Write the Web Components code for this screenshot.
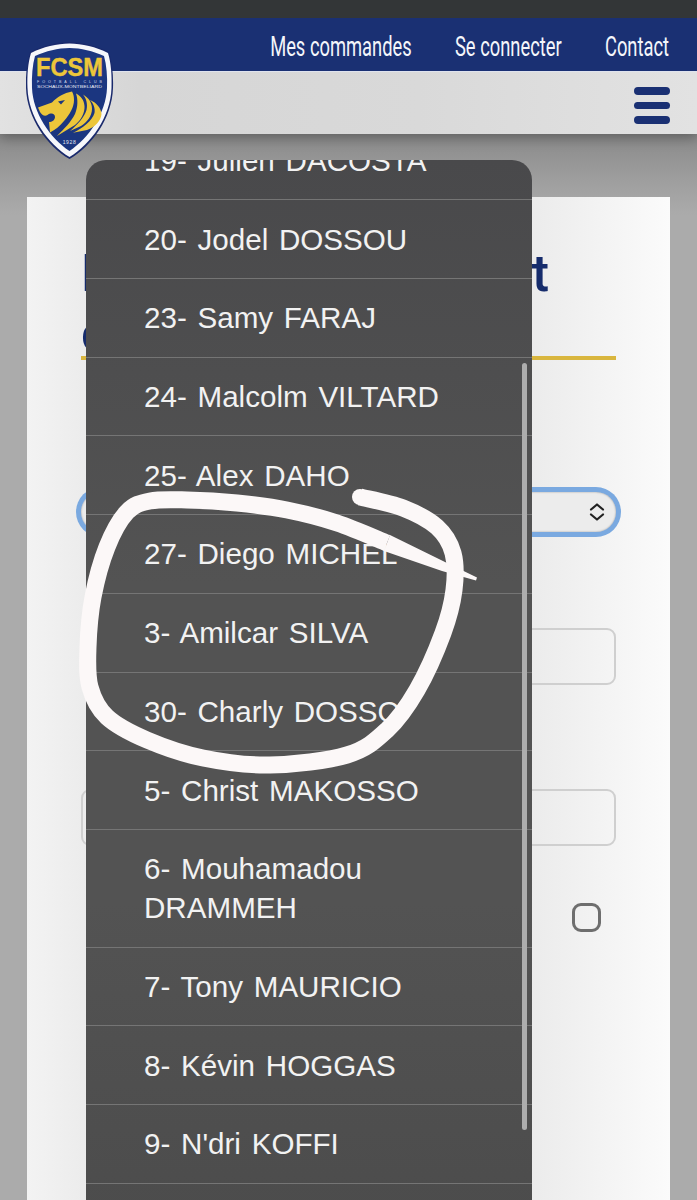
<!DOCTYPE html>
<html lang="fr">
<head>
<meta charset="utf-8">
<title>FCSM</title>
<style>
  html, body { margin: 0; height: 1200px; overflow: hidden; background: #aaaaaa; }
</style>
</head>
<body>
<shop-page>
  <site-header slot="header">
    <a slot="nav">Mes commandes</a>
    <a slot="nav">Se connecter</a>
    <a slot="nav">Contact</a>
  </site-header>
  <order-form slot="main"></order-form>
  <player-picker slot="overlay">
    <player-option>19- Julien DACOSTA</player-option>
    <player-option>20- Jodel DOSSOU</player-option>
    <player-option>23- Samy FARAJ</player-option>
    <player-option>24- Malcolm VILTARD</player-option>
    <player-option>25- Alex DAHO</player-option>
    <player-option>27- Diego MICHEL</player-option>
    <player-option>3- Amilcar SILVA</player-option>
    <player-option>30- Charly DOSSO</player-option>
    <player-option>5- Christ MAKOSSO</player-option>
    <player-option>6- Mouhamadou DRAMMEH</player-option>
    <player-option>7- Tony MAURICIO</player-option>
    <player-option>8- Kévin HOGGAS</player-option>
    <player-option>9- N'dri KOFFI</player-option>
  </player-picker>
  <pen-circle slot="overlay"></pen-circle>
</shop-page>

<script>
class ShopPage extends HTMLElement {
    constructor() {
        super();
        this.attachShadow({ mode: 'open' });
        this.shadowRoot.innerHTML = `
            <style>
                :host {
                    display: block;
                    position: relative;
                    width: 697px;
                    height: 1200px;
                    overflow: hidden;
                    background: linear-gradient(#8a8a8a 134px, #a0a0a0 185px, #ababab 215px);
                }
            </style>
            <slot name="header"></slot>
            <slot name="main"></slot>
            <slot name="overlay"></slot>
        `;
    }
}

class SiteHeader extends HTMLElement {
    constructor() {
        super();
        this.attachShadow({ mode: 'open' });
        this.shadowRoot.innerHTML = `
            <style>
                :host {
                    display: block;
                    position: relative;
                    z-index: 2;
                    box-shadow: 0 4px 12px rgba(0,0,0,0.3);
                }
                .status { height: 18px; background: #333637; }
                .top {
                    height: 54px;
                    box-sizing: border-box;
                    background: #1a3073;
                    border-bottom: 1px solid #dfe3ee;
                    display: flex;
                    justify-content: flex-end;
                    align-items: center;
                    padding: 4px 28px 0 0;
                }
                /* the nav font is a tall condensed one, so squeeze the row */
                nav {
                    display: flex;
                    gap: 66px;
                    transform: scaleX(0.655);
                    transform-origin: right center;
                }
                ::slotted(a) {
                    color: #f4f6fb;
                    font: 400 28px/1 "Roboto", sans-serif;
                    display: block;
                    white-space: nowrap;
                }
                .bar {
                    height: 62px;
                    box-sizing: border-box;
                    padding: 5px 27px 0 0;
                    background: linear-gradient(90deg, #e2e2e2, #d6d6d6 20%, #d9d9d9 60%, #e2e2e2);
                    display: flex;
                    justify-content: flex-end;
                    align-items: center;
                }
                .burger { display: flex; flex-direction: column; gap: 7px; width: 36px; }
                .burger i { display: block; height: 7.5px; border-radius: 4px; background: #1a3073; }
                logo-badge { position: absolute; left: 26px; top: 42px; }
            </style>
            <div class="status"></div>
            <div class="top"><nav><slot name="nav"></slot></nav></div>
            <div class="bar">
                <div class="burger"><i></i><i></i><i></i></div>
            </div>
            <logo-badge></logo-badge>
        `;
    }
}

class LogoBadge extends HTMLElement {
    constructor() {
        super();
        this.attachShadow({ mode: 'open' });
        this.shadowRoot.innerHTML = `
            <style>
                :host { display: block; width: 88px; height: 118px; }
                svg { display: block; }
                text { font-family: "Liberation Sans", sans-serif; }
            </style>
            <svg width="88" height="118" viewBox="26 42 88 118">
                <path fill="#1a2a6c" d="M69.5 42C82 42 97 46 109 52C112 62 113.5 75 113 88C112 118 92 146 69.5 159C47 146 27 118 26 88C25.5 75 27 62 30 52C42 46 57 42 69.5 42Z"/>
                <path fill="#f6f7fb" d="M69.5 43.5C82 43.5 96 47 108 53C111 63 112 75 111.5 88C110.5 117 91 144 69.5 157C48 144 28.5 117 27.5 88C27 75 28 63 31 53C43 47 57 43.5 69.5 43.5Z"/>
                <path fill="#1b3680" d="M69.5 48C81 48 93 51 104 56C106.5 65 107.5 76 107 88C106 113 89 138 69.5 151C50 138 33 113 32 88C31.5 76 32.5 65 35 56C46 51 58 48 69.5 48Z"/>
                <text x="36" y="76" font-size="25.5" font-weight="700" fill="#ecc63a" stroke="#ecc63a" stroke-width="0.4" textLength="67" lengthAdjust="spacingAndGlyphs">FCSM</text>
                <text x="37" y="83" font-size="3.6" fill="#d8dded" textLength="65" lengthAdjust="spacing">FOOTBALL CLUB</text>
                <text x="37" y="87.5" font-size="3.8" fill="#e6e9f2" textLength="65" lengthAdjust="spacingAndGlyphs">SOCHAUX-MONTBELIARD</text>
                <g fill="#ecc63a">
                    <path d="M72 91.5C64 93 57 97 52 102.5L38 107.5L40 112C42 115.5 45 116.5 47.5 115C51 112.5 55 113.5 55 117C55 120 52 122 49 122L50 132.5C55 130 60 126 64 121C70 114 74 107 74 100C74 96.5 73.5 94 72 91.5Z"/>
                    <path d="M76 93.5C81 96 84 100 84.5 106C85 113 81 120 75 125L57 136C64 129 71 122 75 114C78 107 78 99 76 93.5Z"/>
                    <path d="M83 94.5C89 98 92 103 92 109C92 116 87 122 81 126L70 131C77 125 84 118 86.5 110C88 104 86 98 83 94.5Z"/>
                    <path d="M90 100C97 103 101 108 101.5 114C101 121 95 127 87 130L73 132.8C83 128 92 121 94.5 113C95.5 108 93 103 90 100Z"/>
                </g>
                <path fill="#1b3680" d="M58 101.5l7-1.5-4 4.5z"/>
                <text x="69.5" y="143.5" font-size="5" fill="#e6e9f2" text-anchor="middle" letter-spacing="0.6">1928</text>
            </svg>
        `;
    }
}

class OrderForm extends HTMLElement {
    constructor() {
        super();
        this.attachShadow({ mode: 'open' });
        this.shadowRoot.innerHTML = `
            <style>
                :host {
                    display: block;
                    margin: 63px 27px 0;
                    height: 1100px;
                    padding: 47px 54px 0;
                    box-sizing: border-box;
                    background: linear-gradient(90deg, #f3f3f3, #ebebeb 10%, #ebebeb 78%, #fbfbfb);
                }
                h1 {
                    margin: 0;
                    width: 468px;
                    height: 112px;
                    color: #162c6c;
                    font: 500 52px/60px "Roboto", sans-serif;
                    text-align: justify;
                }
                hr {
                    margin: 0;
                    border: 0;
                    height: 4px;
                    background: #d9b63e;
                }
                .select {
                    margin-top: 132px;
                    height: 40px;
                    border-radius: 20px;
                    background: #ececec;
                    box-shadow: 0 0 0 5px #7aa9e0, inset 0 0 2px #999;
                    display: flex;
                    justify-content: flex-end;
                    align-items: center;
                    padding-right: 11px;
                }
                .field {
                    height: 57px;
                    box-sizing: border-box;
                    border: 2px solid #cfcfcf;
                    border-radius: 9px;
                }
                .f1 { margin-top: 96px; }
                .f2 { margin-top: 104px; }
                .check {
                    margin: 57px 15px 0 auto;
                    width: 29px;
                    height: 29px;
                    box-sizing: border-box;
                    border: 3.5px solid #6e6e6e;
                    border-radius: 9px;
                }
            </style>
            <h1>Flocage du produit complet</h1>
            <hr>
            <div class="select">
                <svg width="16" height="18" viewBox="0 0 16 18" fill="none" stroke="#222" stroke-width="2.2" stroke-linecap="round" stroke-linejoin="round"><path d="M2 6.5L8 1.5l6 5M2 11.5l6 5 6-5"/></svg>
            </div>
            <div class="field f1"></div>
            <div class="field f2"></div>
            <div class="check"></div>
        `;
    }
}

class PlayerPicker extends HTMLElement {
    constructor() {
        super();
        this.attachShadow({ mode: 'open' });
        this.shadowRoot.innerHTML = `
            <style>
                :host {
                    position: absolute;
                    left: 86px;
                    top: 160px;
                    width: 446px;
                    height: 1060px;
                    overflow: hidden;
                    border-radius: 20px 20px 0 0;
                    background: linear-gradient(#49494b, #535353 40%, #535353 70%, #4c4c4c);
                }
                .list { margin-top: -38.3px; }
                .thumb {
                    position: absolute;
                    left: 436px;
                    top: 203px;
                    width: 5px;
                    height: 767px;
                    border-radius: 3px;
                    background: #adadad;
                }
            </style>
            <div class="list"><slot></slot></div>
            <div class="thumb"></div>
        `;
    }
}

class PlayerOption extends HTMLElement {
    constructor() {
        super();
        this.attachShadow({ mode: 'open' });
        this.shadowRoot.innerHTML = `
            <style>
                :host {
                    display: block;
                    padding: 19.35px 60px 19.35px 58px;
                    border-bottom: 1px solid #757575;
                    color: #f2f2f2;
                    font: 400 29.6px/39px "Liberation Sans", sans-serif;
                    word-spacing: 2.5px;
                }
            </style>
            <slot></slot>
        `;
    }
}

// centre line of the hand drawn ring, traced from the picture
const PEN_POINTS = [
    [360, 497], [403, 508], [437, 527], [453, 553], [454, 590], [443, 633], [417, 690],
    [387, 730], [347, 755], [270, 765], [203, 758], [147, 740], [107, 717], [90, 687],
    [88, 647], [93, 597], [107, 547], [127, 512], [150, 501], [187, 500], [237, 503],
    [287, 510], [337, 523], [387, 543]
];

function smoothPath(pts) {
    let d = `M${pts[0][0]} ${pts[0][1]}`;
    for (let i = 0; i < pts.length - 1; i++) {
        const p0 = pts[Math.max(i - 1, 0)];
        const p1 = pts[i];
        const p2 = pts[i + 1];
        const p3 = pts[Math.min(i + 2, pts.length - 1)];
        const c1 = [p1[0] + (p2[0] - p0[0]) / 6, p1[1] + (p2[1] - p0[1]) / 6];
        const c2 = [p2[0] - (p3[0] - p1[0]) / 6, p2[1] - (p3[1] - p1[1]) / 6];
        d += `C${c1[0]} ${c1[1]} ${c2[0]} ${c2[1]} ${p2[0]} ${p2[1]}`;
    }
    return d;
}

class PenCircle extends HTMLElement {
    constructor() {
        super();
        this.attachShadow({ mode: 'open' });
        this.shadowRoot.innerHTML = `
            <style>
                :host { position: absolute; left: 0; top: 0; width: 697px; height: 1200px; pointer-events: none; }
                svg { display: block; }
            </style>
            <svg width="697" height="1200" viewBox="0 0 697 1200" fill="none">
                <path stroke="#fcf8f8" stroke-width="17" stroke-linecap="butt" stroke-linejoin="round" d="${smoothPath(PEN_POINTS)}"/>
                <circle cx="360" cy="497" r="8" fill="#fcf8f8"/>
                <path fill="#fcf8f8" d="M390 535L445 562L477 577.5L476 580.5L442 571L384 551Z"/>
            </svg>
        `;
    }
}

customElements.define('shop-page', ShopPage);
customElements.define('site-header', SiteHeader);
customElements.define('logo-badge', LogoBadge);
customElements.define('order-form', OrderForm);
customElements.define('player-picker', PlayerPicker);
customElements.define('player-option', PlayerOption);
customElements.define('pen-circle', PenCircle);
</script>
</body>
</html>
